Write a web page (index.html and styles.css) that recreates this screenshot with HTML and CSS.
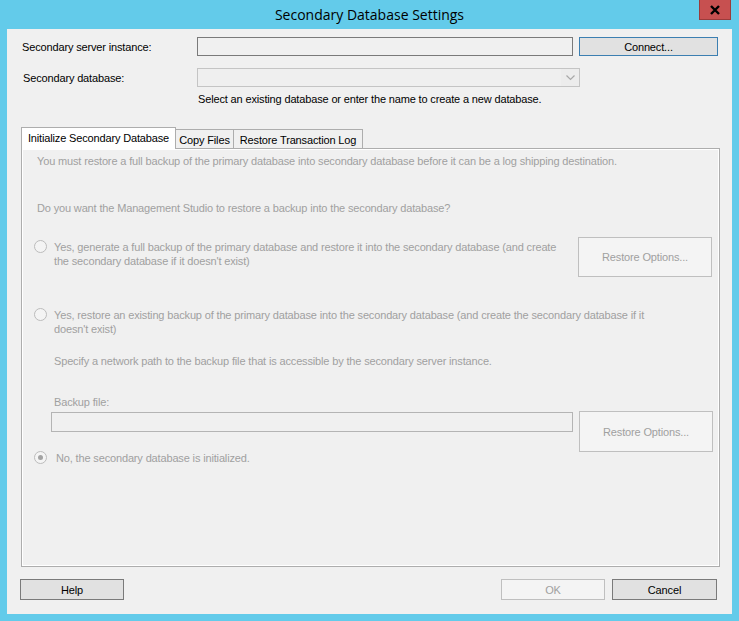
FILE: index.html
```html
<!DOCTYPE html>
<html>
<head>
<meta charset="utf-8">
<link rel="stylesheet" href="styles.css">
</head>
<body>
<div class="titlebar">
  <span class="title">Secondary Database Settings</span>
  <div class="close"><svg width="12" height="10" viewBox="0 0 12 10"><path d="M2 1 L10 9 M10 1 L2 9" stroke="#000" stroke-width="2.4" fill="none"/></svg></div>
</div>
<div class="window">
  <div class="row r1">
    <span class="lbl l1">Secondary server instance:</span>
    <div class="input server"></div>
    <div class="btn connect">Connect...</div>
  </div>
  <div class="row r2">
    <span class="lbl l2">Secondary database:</span>
    <div class="combo"><div class="combo-text"></div><svg class="chev" width="9" height="6" viewBox="0 0 9 6"><path d="M0.5 0.5 L4.5 4.5 L8.5 0.5" stroke="#a8a8a8" stroke-width="1.2" fill="none"/></svg></div>
  </div>
  <div class="hint">Select an existing database or enter the name to create a new database.</div>
  <div class="tabs">
    <div class="tab active">Initialize Secondary Database</div>
    <div class="tab copy">Copy Files</div>
    <div class="tab restore">Restore Transaction Log</div>
  </div>
  <div class="panel">
    <p class="txt p1">You must restore a full backup of the primary database into secondary database before it can be a log shipping destination.</p>
    <p class="txt p2">Do you want the Management Studio to restore a backup into the secondary database?</p>
    <div class="opt1">
      <div class="radio-line">
        <span class="radio"></span>
        <span class="rtext">Yes, generate a full backup of the primary database and restore it into the secondary database (and create<br>the secondary database if it doesn't exist)</span>
      </div>
      <div class="btn dis restore-btn">Restore Options...</div>
    </div>
    <div class="radio-line opt2">
      <span class="radio"></span>
      <span class="rtext">Yes, restore an existing backup of the primary database into the secondary database (and create the secondary database if it<br>doesn't exist)</span>
    </div>
    <p class="txt indent specify">Specify a network path to the backup file that is accessible by the secondary server instance.</p>
    <p class="txt indent backup-lbl">Backup file:</p>
    <div class="backup-row">
      <div class="input dis-input backup"></div>
      <div class="btn dis restore-btn2">Restore Options...</div>
    </div>
    <div class="radio-line opt3">
      <span class="radio checked"></span>
      <span class="rtext">No, the secondary database is initialized.</span>
    </div>
  </div>
  <div class="footer">
    <div class="btn normal help">Help</div>
    <div class="spacer"></div>
    <div class="btn dis ok">OK</div>
    <div class="btn normal cancel">Cancel</div>
  </div>
</div>
</body>
</html>
```

FILE: styles.css
```css
html, body {
  margin: 0;
  padding: 0;
}
body {
  width: 739px;
  height: 621px;
  background: #63cbea;
  font-family: "Liberation Sans", Arial, sans-serif;
  font-size: 11px;
  letter-spacing: -0.15px;
  color: #000;
  overflow: hidden;
}
.titlebar {
  position: relative;
  height: 29px;
  display: flex;
  justify-content: center;
  align-items: center;
}
.title {
  font-family: "Open Sans", "Noto Sans", sans-serif;
  font-size: 14px;
  letter-spacing: 0;
  color: #000;
  margin-top: -1px;
}
.close {
  position: absolute;
  top: 0;
  left: 699px;
  width: 32px;
  height: 20px;
  background: #c75050;
  border: 1px solid #9a3b3b;
  border-top: none;
  box-sizing: border-box;
  display: flex;
  align-items: center;
  justify-content: center;
}
.window {
  margin: 0 7px;
  width: 725px;
  height: 585px;
  background: #f0f0f0;
  box-sizing: border-box;
  overflow: hidden;
}
.row {
  display: flex;
  align-items: center;
}
.r1 {
  margin-top: 8px;
  padding-left: 15px;
}
.l1 { width: 175px; }
.r2 {
  margin-top: 12px;
  padding-left: 16px;
}
.l2 { width: 174px; }
.input {
  box-sizing: border-box;
  border: 1px solid #7a7a7a;
  background: #f0f0f0;
}
.server {
  width: 376px;
  height: 19px;
}
.btn {
  box-sizing: border-box;
  display: flex;
  align-items: center;
  justify-content: center;
  font-size: 11px;
}
.connect {
  margin-left: 6px;
  width: 139px;
  height: 19px;
  border: 1px solid #3c7fb1;
  background: #e1e1e1;
}
.combo {
  width: 383px;
  height: 19px;
  box-sizing: border-box;
  border: 1px solid #c4c4c4;
  background: #ececec;
  display: flex;
  align-items: center;
}
.combo-text {
  width: 363px;
  height: 17px;
  background: #efefef;
}
.chev {
  margin-left: 5px;
  margin-top: 1px;
}
.hint {
  margin-top: 6px;
  padding-left: 191px;
  line-height: 13px;
}
.tabs {
  margin-top: 21px;
  margin-left: 14px;
  height: 22px;
  margin-bottom: -1px;
  display: flex;
  align-items: flex-end;
}
.tab {
  box-sizing: border-box;
  height: 20px;
  border: 1px solid #adadad;
  background: #f0f0f0;
  display: flex;
  align-items: center;
  justify-content: center;
  padding-top: 1px;
}
.tab.active {
  position: relative;
  z-index: 1;
  height: 22px;
  width: 155px;
  background: #fff;
  border-bottom: none;
  padding-top: 0;
  padding-bottom: 2px;
}
.tab.copy {
  width: 59px;
  margin-left: -1px;
}
.tab.restore {
  width: 130px;
  margin-left: -1px;
}
.panel {
  margin-left: 14px;
  width: 699px;
  height: 419px;
  box-sizing: border-box;
  border: 1px solid #adadad;
  box-shadow: inset 0 0 0 1px #ffffff;
  background: #f0f0f0;
  padding: 5px 7px 0 12px;
  color: #a0a0a0;
}
.txt {
  margin: 0;
  line-height: 14px;
  padding-left: 3px;
  white-space: nowrap;
}
.p2 { margin-top: 33px; }
.opt1 {
  margin-top: 22px;
  display: flex;
  align-items: flex-start;
}
.radio-line {
  display: flex;
  align-items: flex-start;
  line-height: 14px;
}
.opt1 .radio-line {
  margin-top: 3px;
}
.radio {
  box-sizing: border-box;
  width: 13px;
  height: 13px;
  border-radius: 50%;
  border: 1px solid #bcbcbc;
  background: #f4f4f4;
  margin-right: 7px;
  flex-shrink: 0;
  display: flex;
  align-items: center;
  justify-content: center;
}
.radio.checked::after {
  content: "";
  width: 5px;
  height: 5px;
  border-radius: 50%;
  background: #a3a3a3;
}
.rtext {
  white-space: nowrap;
}
.btn.dis {
  border: 1px solid #bfbfbf;
  background: #f4f4f4;
  color: #a0a0a0;
}
.restore-btn {
  margin-left: auto;
  width: 134px;
  height: 40px;
  flex-shrink: 0;
}
.opt2 { margin-top: 31px; }
.indent { padding-left: 20px; }
.specify { margin-top: 18px; }
.backup-lbl { margin-top: 27px; }
.backup-row {
  margin-top: 2px;
  height: 21px;
  display: flex;
  align-items: flex-start;
  overflow: visible;
}
.dis-input {
  border-color: #b4b4b4;
}
.backup {
  margin-top: 1px;
  margin-left: 17px;
  width: 522px;
  height: 20px;
  flex-shrink: 0;
}
.restore-btn2 {
  margin-left: 6px;
  width: 134px;
  height: 41px;
  flex-shrink: 0;
}
.opt3 { margin-top: 19px; }
.opt3 .radio { margin-right: 9px; }
.footer {
  margin-top: 12px;
  padding: 0 15px 0 13px;
  display: flex;
  height: 21px;
}
.spacer { flex: 1; }
.btn.normal {
  border: 1px solid #7a7a7a;
  background: #e1e1e1;
}
.help { width: 104px; height: 21px; }
.ok { width: 104px; height: 21px; }
.cancel { width: 105px; height: 21px; margin-left: 7px; }
```
